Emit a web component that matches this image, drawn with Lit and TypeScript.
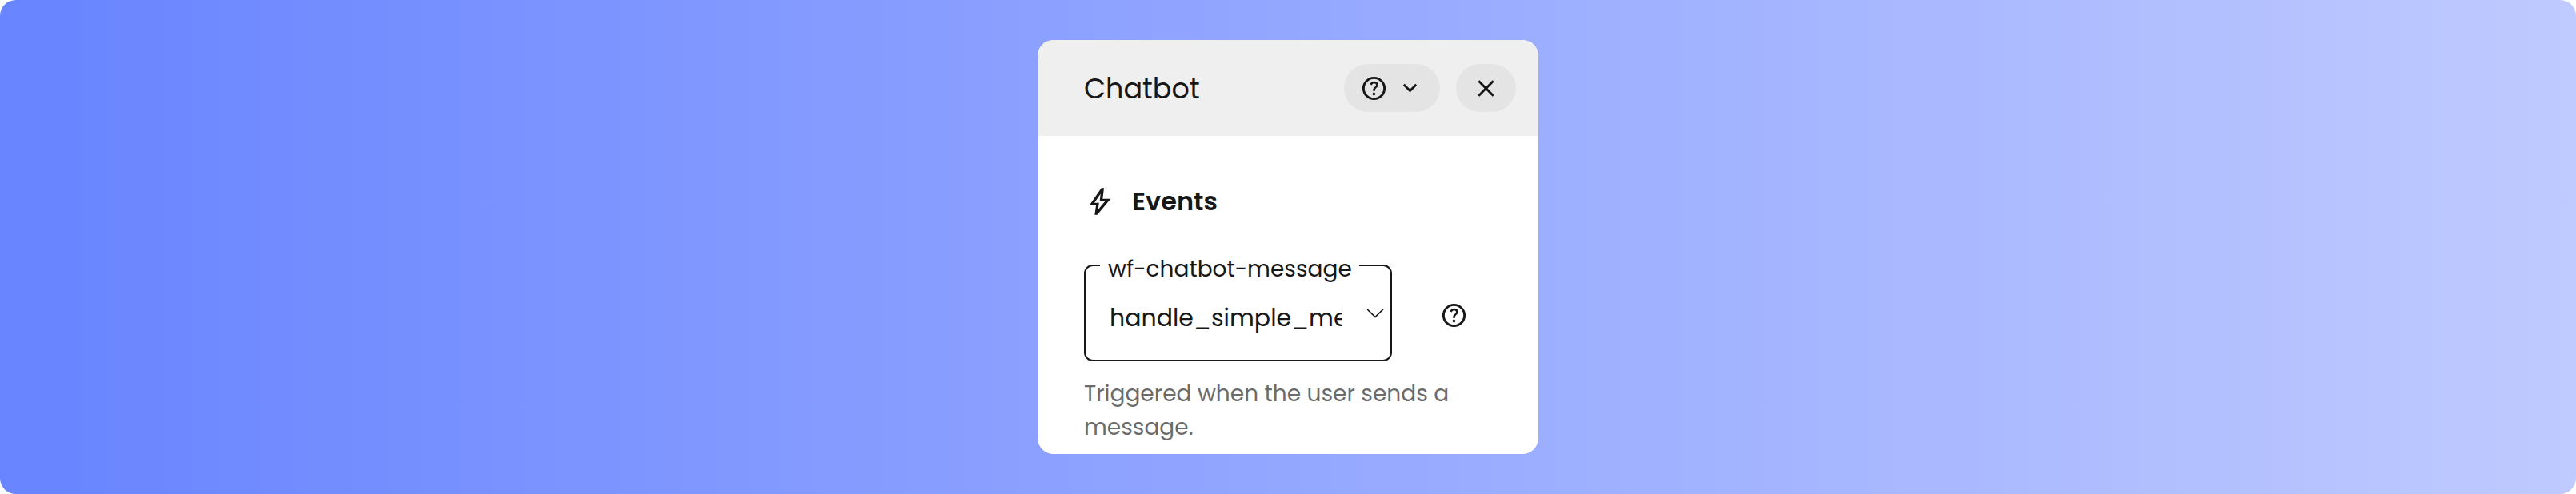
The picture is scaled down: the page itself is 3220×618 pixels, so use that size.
import { LitElement, html, css, svg } from 'lit';
import { customElement, property } from 'lit/decorators.js';

const glyphs = {
  help: svg`
    <path d="M478-240q21 0 35.5-14.5T528-290q0-21-14.5-35.5T478-340q-21 0-35.5 14.5T428-290q0 21 14.5 35.5T478-240Zm-36-154h74q0-33 7.5-52t42.5-52q26-26 41-49.5t15-56.5q0-56-41-86t-97-30q-57 0-92.5 30T342-618l66 26q5-18 22.5-39t53.5-21q32 0 48 17.5t16 38.5q0 20-12 37.5T506-526q-44 39-54 59t-10 73Z"/>
    <circle cx="480" cy="-480" r="360" fill="none" stroke="currentColor" stroke-width="80"/>`,
  expand: svg`<path d="M480-344 240-584l56-56 184 184 184-184 56 56-240 240Z"/>`,
  close: svg`<path d="m256-200-56-56 224-224-224-224 56-56 224 224 224-224 56 56-224 224 224 224-56 56-224-224-224 224Z"/>`,
  bolt: svg`<path d="m422-232 207-248H469l29-227-185 267h139l-30 208ZM320-80l40-280H160l360-520h80l-40 320h240L400-80h-80Z"/>`,
};

@customElement('ui-icon')
class UiIcon extends LitElement {
  static styles = css`
    :host { display: block; flex: none; width: 35px; height: 35px; }
    svg { display: block; width: 100%; height: 100%; fill: currentColor; }
  `;

  @property() name: keyof typeof glyphs = 'help';

  render() {
    return html`<svg viewBox="0 -960 960 960">${glyphs[this.name]}</svg>`;
  }
}

@customElement('event-select')
class EventSelect extends LitElement {
  static styles = css`
    :host { display: block; }
    .field {
      position: relative;
      box-sizing: border-box;
      width: 385px;
      height: 121px;
      padding: 0 8px 0 30px;
      border: 2px solid #171717;
      border-radius: 11px;
      display: flex;
      align-items: center;
      justify-content: space-between;
    }
    .label {
      position: absolute;
      left: 18px;
      top: -17px;
      padding: 0 9px 0 10px;
      background: #fff;
      font-size: 28px;
      line-height: 42px;
      white-space: nowrap;
    }
    .value {
      width: 291px;
      overflow: hidden;
      white-space: nowrap;
      font-size: 30px;
      line-height: 45px;
      padding-top: 11px;
    }
    .arrow {
      display: block;
      width: 22px;
      height: 12px;
      fill: none;
      stroke: #171717;
      stroke-width: 1.7;
    }
  `;

  @property() label = '';
  @property() value = '';

  render() {
    return html`
      <div class="field">
        <span class="label">${this.label}</span>
        <span class="value">${this.value}</span>
        <svg class="arrow" viewBox="0 0 22 12"><path d="M1.2 1 11 10.6 20.8 1"/></svg>
      </div>
    `;
  }
}

@customElement('app-root')
class AppRoot extends LitElement {
  static styles = css`
    :host {
      display: block;
      font-family: Poppins, Inter, sans-serif;
      color: #171717;
    }
    .stage {
      box-sizing: border-box;
      height: 618px;
      padding: 50px 0;
      border-radius: 20px;
      background: linear-gradient(90deg, #6884ff, #bfcaff);
      display: flex;
      justify-content: center;
    }
    .panel {
      width: 626px;
      border-radius: 20px;
      overflow: hidden;
      background: #fff;
    }
    .header {
      box-sizing: border-box;
      height: 120px;
      padding: 0 28px 0 58px;
      background: #efefef;
      display: flex;
      align-items: center;
      gap: 20px;
    }
    .title { flex: 1; padding-top: 2px; font-size: 35px; line-height: 52px; }
    .pill {
      height: 60px;
      padding: 0 20px;
      border-radius: 30px;
      background: #e4e4e4;
      display: flex;
      align-items: center;
      gap: 10px;
    }
    .body { padding: 58px 28px 0 58px; }
    .section { display: flex; align-items: center; gap: 20px; height: 48px; }
    .section ui-icon { width: 40px; height: 40px; }
    .heading { font-size: 32px; line-height: 48px; font-weight: 600; }
    .row { display: flex; align-items: center; gap: 60px; margin-top: 55px; }
    .row ui-icon { padding-top: 5px; }
    .hint { margin-top: 20px; font-size: 28px; line-height: 42px; color: #6b6b6b; }
  `;

  render() {
    return html`
      <div class="stage">
        <div class="panel">
          <div class="header">
            <div class="title">Chatbot</div>
            <div class="pill"><ui-icon name="help"></ui-icon><ui-icon name="expand"></ui-icon></div>
            <div class="pill"><ui-icon name="close"></ui-icon></div>
          </div>
          <div class="body">
            <div class="section">
              <ui-icon name="bolt"></ui-icon>
              <div class="heading">Events</div>
            </div>
            <div class="row">
              <event-select label="wf-chatbot-message" value="handle_simple_message"></event-select>
              <ui-icon name="help"></ui-icon>
            </div>
            <div class="hint">Triggered when the user sends a message.</div>
          </div>
        </div>
      </div>
    `;
  }
}
